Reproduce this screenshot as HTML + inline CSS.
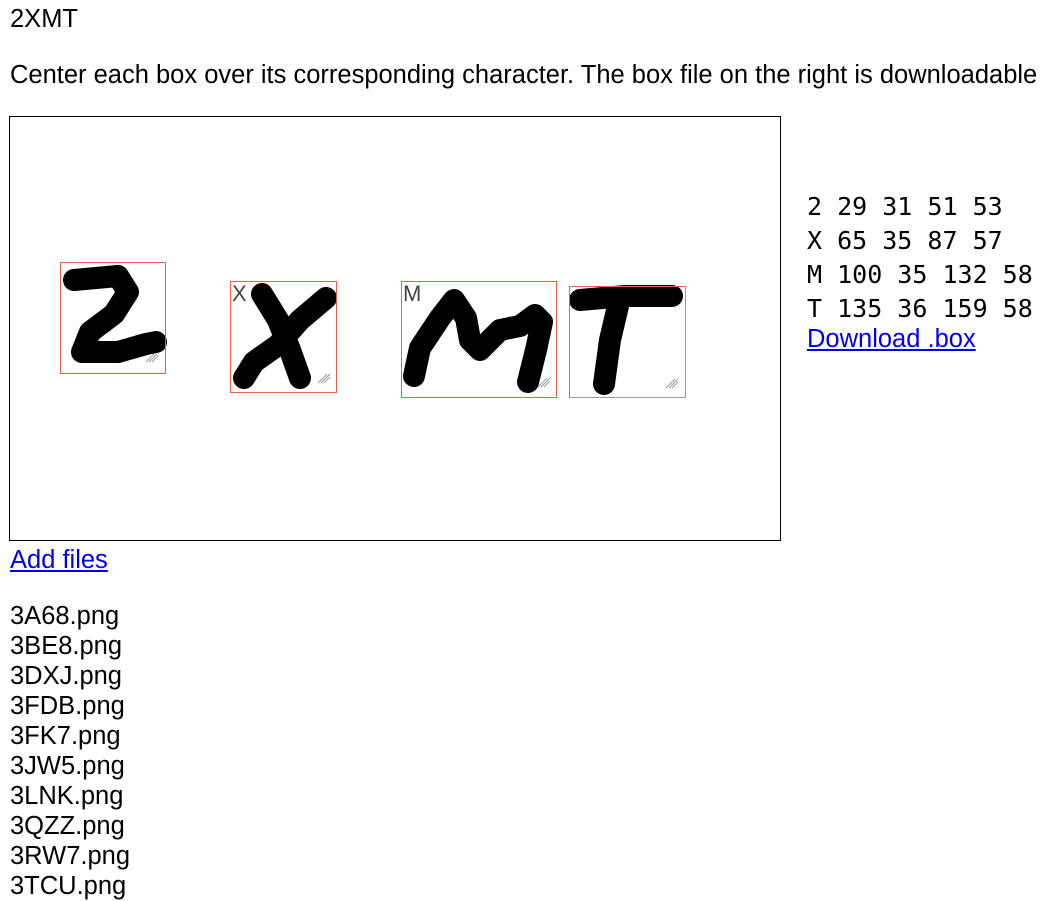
<!DOCTYPE html>
<html><head><meta charset="utf-8"><style>
body{margin:0;width:1048px;height:883px;overflow:hidden;background:#fff;font-family:"Liberation Sans",sans-serif;color:#000;}
.t{position:absolute;left:10px;font-size:25.5px;line-height:30px;white-space:nowrap}
a{color:#0000ee;text-decoration:underline}
.mono{position:absolute;left:807px;top:190px;font-family:"DejaVu Sans Mono","Liberation Mono",monospace;font-size:25px;line-height:34px;white-space:pre}
.frame{position:absolute;left:9px;top:116px;width:770px;height:423px;border:1px solid #000}
.bx{position:absolute;border:1px solid #e8604c;box-sizing:border-box}
.lbl{position:absolute;font-size:22px;color:#444;left:1px;top:1px;line-height:22px}
</style></head><body>
<div class="t" style="top:4px">2XMT</div>
<div class="t" style="top:60px">Center each box over its corresponding character. The box file on the right is downloadable</div>
<div class="frame"></div>
<svg style="position:absolute;left:0;top:0" width="790" height="545">
<g fill="none" stroke="#000" stroke-width="22" stroke-linejoin="round" stroke-linecap="round">
<path d="M74 280 L118 276 L128 292 L114 314 L90 332 L82 352 L118 352 L146 344 L156 342"/>
<path d="M262 294 L278 320 L290 350 L300 378"/>
<path d="M326 298 L300 320 L278 345 L254 362 L244 378"/>
<path d="M414 376 L420 348 L440 318 L454 300 L466 318 L470 340 L480 350 L500 330 L520 326 L535 315 L542 322 L536 350 L528 382"/>
<path d="M580 300 L625 296 L672 296"/>
<path d="M618 306 L610 340 L604 384"/>
</g>
<g stroke="#999" stroke-width="1">
<path d="M146 362 L154 354 M149 362 L157 354 M152 362 L158 356"/>
<path d="M318 383 L327 374 M321 383 L330 374 M324 383 L330 377"/>
<path d="M538 387 L547 378 M541 387 L550 378 M544 387 L550 381"/>
<path d="M666 388 L675 379 M669 388 L678 379 M672 388 L678 382"/>
</g>
</svg>
<div class="bx" style="left:60px;top:262px;width:106px;height:112px"></div>
<div class="bx" style="left:230px;top:281px;width:107px;height:112px"><span class="lbl">X</span></div>
<div class="bx" style="left:401px;top:281px;width:156px;height:117px"><span class="lbl">M</span></div>
<div class="bx" style="left:569px;top:286px;width:117px;height:112px;border-color:#999"></div>
<div class="bx" style="left:569px;top:286px;width:117px;height:112px;border-right:none;border-bottom:none"></div>
<div class="mono">2 29 31 51 53
X 65 35 87 57
M 100 35 132 58
T 135 36 159 58</div>
<div class="t" style="left:807px;top:324px"><a>Download .box</a></div>
<div class="t" style="top:545px"><a>Add files</a></div>
<div class="t" style="top:601px">3A68.png<br>3BE8.png<br>3DXJ.png<br>3FDB.png<br>3FK7.png<br>3JW5.png<br>3LNK.png<br>3QZZ.png<br>3RW7.png<br>3TCU.png</div>
</body></html>
